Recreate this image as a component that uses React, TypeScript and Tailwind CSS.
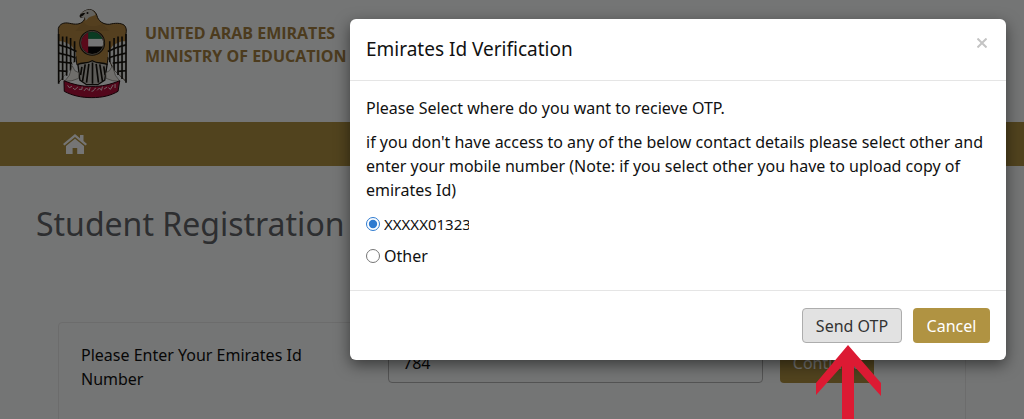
import React, { useState } from 'react';

const contacts = [
  { id: 'masked', label: 'XXXXX01323', clipped: true },
  { id: 'other', label: 'Other', clipped: false },
];

function Emblem() {
  return (
    <svg viewBox="50 20 220 275" className="h-[92px] w-[73px]" role="img" aria-label="UAE emblem">
      {/* Wings and body */}
      <path
        d="M57 84C60 70 74 64 91 68C108 72 122 72 132 62C137 56 138 50 134 48L124 50C120 43 128 34 140 29C154 23 169 30 173 44C177 61 192 72 211 71C227 67 245 66 256 74C262 80 263 88 261 100L258 240L222 205L207 170L204 193H113L110 168L92 205L58 246Z"
        fill="#b78a45"
        stroke="#241b10"
        strokeWidth="3"
      />
      <path d="M122 50C120 43 128 34 140 29C154 23 166 30 169 42C160 48 150 46 145 55L139 60C140 54 137 49 130 49Z" fill="#d8d5cc" />
      <path d="M123 50C119 43 127 35 138 37C135 43 130 46 123 50Z" fill="#1b1813" />
      <circle cx="145" cy="37" r="3" fill="#1b1813" />
      <path d="M133 64C143 79 166 81 190 69L211 91H108Z" fill="#a2753a" opacity="0.5" />
      {/* Wing feathers */}
      <path d="M58 122L70 122L84 128L97 136L110 156V170L91 210L58 244Z" fill="#eef0ee" />
      <path d="M261 122L248 122L234 128L221 136L207 156V170L227 210L260 240Z" fill="#eef0ee" />
      <g stroke="#17140f" fill="none">
        <path d="M58 100V250M70 108V239M82 108V226M94 112V211M106 122V185M261 100V247M249 108V236M237 108V224M225 112V210M212 122V185" strokeWidth="5" />
        <path d="M58 133L86 141L112 153M58 158L88 165L109 172M58 184L98 188M58 211L84 213M261 133L233 141L206 153M261 158L231 165L209 172M261 184L221 188M261 211L235 213" strokeWidth="5" />
      </g>
      {/* Tail and claws */}
      <path d="M116 192C130 184 142 192 159 181C177 192 188 184 204 192L197 239L176 253H142L122 239Z" fill="#c9c7c0" stroke="#17140f" strokeWidth="4" />
      <path d="M128 199L124 224M138 192L130 242M149 190L142 247M160 186V250M171 190L178 247M182 192L190 242M194 198L198 224" stroke="#17140f" strokeWidth="5" />
      <path d="M99 196L107 211L119 217L118 234L98 241L76 243L90 225ZM220 196L211 211L200 217L201 234L221 241L243 243L229 225Z" fill="#f1efe9" stroke="#77736a" strokeWidth="2" />
      {/* Flag disc */}
      <clipPath id="disc">
        <circle cx="159" cy="127" r="34" />
      </clipPath>
      <g clipPath="url(#disc)">
        <rect x="124" y="92" width="70" height="24" fill="#16804a" />
        <rect x="124" y="115" width="70" height="24" fill="#fff" />
        <rect x="124" y="138" width="70" height="24" fill="#080808" />
        <rect x="124" y="92" width="23" height="70" fill="#c4163a" />
      </g>
      <circle cx="159" cy="127" r="36" fill="none" stroke="#241b10" strokeWidth="6" />
      <circle cx="159" cy="127" r="35" fill="none" stroke="#b9b3a5" strokeWidth="2" />
      {/* Ribbon */}
      <path d="M74 241C100 252 129 259 158 258C188 259 215 252 242 241L237 273C215 286 190 292 158 292C126 292 99 286 75 273Z" fill="#b5103c" stroke="#26030d" strokeWidth="3" />
      <path
        d="M85 255L90 262L98 258M101 263L107 268L116 260M119 267H128L129 259M134 272L142 263L150 271L153 261M157 273C167 274 164 262 170 264M174 270L181 263L187 270L190 259M195 266L204 260M208 262L214 267L222 254M228 251V263"
        fill="none"
        stroke="#f7d9e0"
        strokeWidth="3"
      />
    </svg>
  );
}

function HomeIcon() {
  return (
    <svg viewBox="0 0 24 20" className="h-5 w-6" fill="white" aria-hidden="true">
      <path d="M12 0L0 10L1.5 11.6L12 3L22.5 11.6L24 10L20.5 7V1H17V4.2Z" />
      <path d="M12 4.7L3 12V20H9.6V14H14.2V20H21V12Z" />
    </svg>
  );
}

export default function App() {
  const [choice, setChoice] = useState('masked');
  const [isOpen, setIsOpen] = useState(true);

  return (
    <div className="relative h-screen overflow-hidden bg-[#fdffff] font-['Noto_Sans',sans-serif] text-base leading-6 text-[#111111]">
      <header className="flex h-[122px] items-start gap-4 px-14 pt-[7px]">
        <Emblem />
        <p className="pt-[15px] font-['Open_Sans',sans-serif] leading-[23px] font-bold text-[#a58242]">
          UNITED ARAB EMIRATES
          <br />
          MINISTRY OF EDUCATION
        </p>
      </header>

      <nav className="flex h-11 items-center bg-[#b09342] px-[63px]">
        <a href="#home" aria-label="Home">
          <HomeIcon />
        </a>
      </nav>

      <main>
        <h1 className="px-9 pt-9 text-[32px] leading-[44px] text-[#63656a]">Student Registration</h1>
        <form className="mx-[58px] mt-[76px] flex h-40 items-start rounded border border-[#ececec] px-[22px] pt-5">
          <label htmlFor="emirates-id" className="w-[307px] shrink-0 pr-16 leading-6">
            Please Enter Your Emirates Id Number
          </label>
          <input
            id="emirates-id"
            defaultValue="784"
            className="h-10 w-[375px] rounded border border-[#b8b8b8] bg-transparent px-3.5"
          />
          <button type="button" className="ml-[17px] h-10 w-[94px] rounded bg-[#b09342] text-white">
            Continue
          </button>
        </form>
      </main>

      {/* Verification dialog */}
      {isOpen && (
        <div className="absolute inset-0 flex items-start justify-end bg-black/54 pt-[19px] pr-[18px]">
          <div
            role="dialog"
            aria-labelledby="dialog-title"
            className="w-full max-w-[656px] rounded-md bg-white shadow-[0_5px_15px_rgba(0,0,0,0.5)]"
          >
            <div className="flex items-start justify-between border-b border-[#e5e5e5] px-4 pt-4 pb-[17px]">
              <h2 id="dialog-title" className="text-[19px] leading-7">
                Emirates Id Verification
              </h2>
              <button type="button" aria-label="Close" onClick={() => setIsOpen(false)} className="p-0.5 text-[#c4c4c4]">
                <svg viewBox="0 0 10 10" className="m-px h-2.5 w-2.5" stroke="currentColor" strokeWidth="2">
                  <path d="M0.5 0.5L9.5 9.5M9.5 0.5L0.5 9.5" />
                </svg>
              </button>
            </div>

            <div className="px-4 pt-[15px] pb-[22px]">
              <p className="mb-2.5">Please Select where do you want to recieve OTP.</p>
              <p className="mb-2.5">
                if you don't have access to any of the below contact details please select other and enter your mobile
                number (Note: if you select other you have to upload copy of emirates Id)
              </p>
              <div className="flex flex-col gap-2">
                {contacts.map((contact) => (
                  <label key={contact.id} className="flex items-center gap-1">
                    <input
                      type="radio"
                      name="contact"
                      checked={choice === contact.id}
                      onChange={() => setChoice(contact.id)}
                      className="h-3.5 w-3.5 accent-[#2f7bd0]"
                    />
                    <span className={contact.clipped ? 'w-[85px] overflow-hidden text-[15px]' : ''}>{contact.label}</span>
                  </label>
                ))}
              </div>
            </div>

            <div className="flex justify-end gap-[11px] border-t border-[#e5e5e5] px-4 py-[17px]">
              <button type="button" className="h-[35px] w-[100px] rounded border border-[#adadad] bg-[#e2e2e2] text-[#333333]">
                Send OTP
              </button>
              <button type="button" onClick={() => setIsOpen(false)} className="h-[35px] w-[77px] rounded bg-[#b09342] text-white">
                Cancel
              </button>
            </div>
          </div>
        </div>
      )}

      {/* Pointer to the send button */}
      <svg viewBox="0 0 66 74" className="absolute right-[143px] bottom-0 h-[74px] w-[66px]" fill="#dc1a33" aria-hidden="true">
        <path d="M33 0L66 38V51L39 21V74H27V21L1 50V38Z" />
      </svg>
    </div>
  );
}
